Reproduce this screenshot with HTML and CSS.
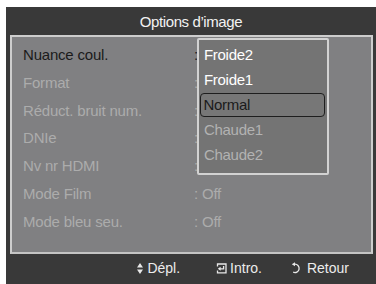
FILE: index.html
```html
<!DOCTYPE html>
<html lang="fr">
<head>
<meta charset="utf-8">
<link rel="stylesheet" href="styles.css">
</head>
<body>
<div class="screen">
  <div class="title">Options d’image</div>
  <div class="content">
    <div class="row active"><span class="label">Nuance coul.</span><span class="value">:</span></div>
    <div class="row"><span class="label">Format</span><span class="value">:</span></div>
    <div class="row"><span class="label">Réduct. bruit num.</span><span class="value">:</span></div>
    <div class="row"><span class="label">DNIe</span><span class="value">:</span></div>
    <div class="row"><span class="label">Nv nr HDMI</span><span class="value">:</span></div>
    <div class="row"><span class="label">Mode Film</span><span class="value">: Off</span></div>
    <div class="row"><span class="label">Mode bleu seu.</span><span class="value">: Off</span></div>
    <div class="dropdown">
      <div class="opt on">Froide2</div>
      <div class="opt on">Froide1</div>
      <div class="opt sel">Normal</div>
      <div class="opt">Chaude1</div>
      <div class="opt">Chaude2</div>
    </div>
  </div>
  <div class="footer">
    <span class="hint hint-move"><svg class="ico" width="6" height="11" viewBox="0 0 6 11"><path d="M3 0 L6 4.5 L0 4.5 Z M0 6.5 L6 6.5 L3 11 Z" fill="#e8e8e8"/></svg>Dépl.</span>
    <span class="hint hint-enter"><svg class="ico" width="11" height="11" viewBox="0 0 11 11"><path d="M1.5 3.5 V1 H10 V9.8 H1.5 V7.5" fill="none" stroke="#e8e8e8" stroke-width="1.3"/><path d="M7.6 3 V5.8 H3.5" fill="none" stroke="#e8e8e8" stroke-width="1.3"/><path d="M1.8 5.8 L4.6 3.8 L4.6 7.8 Z" fill="#e8e8e8"/></svg>Intro.</span>
    <span class="hint hint-back"><svg class="ico" width="12" height="12" viewBox="0 0 12 12"><path d="M4.5 2.2 A4.2 4.2 0 1 1 3.2 10.2" fill="none" stroke="#e8e8e8" stroke-width="1.3"/><path d="M1.8 2.2 L5 0.2 L5 4.2 Z" fill="#e8e8e8"/></svg>Retour</span>
  </div>
</div>
</body>
</html>
```
FILE: styles.css
```css
html, body {
  margin: 0;
  padding: 0;
  background: #ffffff;
}
body {
  font-family: "Liberation Sans", Arial, sans-serif;
}
.screen {
  margin: 7px 0 0 6px;
  width: 370px;
  height: 277px;
  background: #393939;
  display: flex;
  flex-direction: column;
}
.title {
  height: 28px;
  line-height: 29px;
  text-align: center;
  color: #f2f2f2;
  font-size: 15px;
  letter-spacing: -0.4px;
}
.content {
  position: relative;
  margin: 0 3px 0 4px;
  height: 219px;
  box-sizing: border-box;
  border: 2px solid #cdcdcd;
  border-bottom-color: #c4c4c4;
  background: #808082;
  padding: 4px 0 0 11px;
  display: flex;
  flex-direction: column;
}
.row {
  height: 27.8px;
  line-height: 28px;
  display: flex;
  font-size: 15px;
  letter-spacing: -0.2px;
  color: #acacac;
}
.row.active {
  color: #1b1b1b;
}
.label {
  width: 171px;
  flex: none;
}
.dropdown {
  position: absolute;
  left: 185px;
  top: 1px;
  width: 132px;
  height: 137px;
  box-sizing: border-box;
  border: 2px solid #d2d2d2;
  border-radius: 2px;
  background: #747474;
  padding: 3px 2px 0 1px;
  display: flex;
  flex-direction: column;
  gap: 1px;
}
.opt {
  height: 24px;
  line-height: 24px;
  box-sizing: border-box;
  padding-left: 4px;
  font-size: 15px;
  letter-spacing: -0.3px;
  color: #b2b2b2;
}
.opt.on {
  color: #ffffff;
}
.opt.sel {
  color: #1b1b1b;
  border: 1.5px solid #1e1e1e;
  border-radius: 4px;
  line-height: 21px;
  padding-left: 2.5px;
  background: #777777;
}
.footer {
  flex: 1;
  display: flex;
  justify-content: flex-end;
  align-items: center;
  padding: 0 27px 2px 0;
  color: #ececec;
  font-size: 14px;
}
.hint {
  display: flex;
  align-items: center;
}
.ico {
  display: block;
  flex: none;
}
.hint-move .ico {
  margin-right: 4px;
}
.hint-enter {
  margin-left: 36px;
}
.hint-enter .ico {
  margin-right: 3px;
}
.hint-back {
  margin-left: 28px;
}
.hint-back .ico {
  margin-right: 5px;
}
```
